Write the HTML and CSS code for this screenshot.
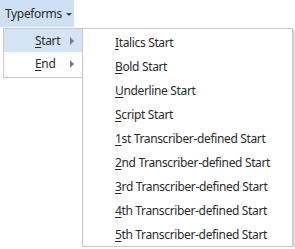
FILE: index.html
```html
<!DOCTYPE html>
<html lang="en">
<head>
  <meta charset="UTF-8" />
  <title>Typeforms</title>
  <link rel="stylesheet" href="styles.css">
</head>
<body>
  <div class="menubar">
    <span class="menu-button">Typeforms <span class="caret"></span></span>
  </div>

  <div class="menus">
    <ul class="menu main-menu">
      <li class="item active"><u>S</u>tart <span class="arrow"></span></li>
      <li class="item"><u>E</u>nd <span class="arrow"></span></li>
    </ul>

    <ul class="menu sub-menu">
      <li class="item"><u>I</u>talics Start</li>
      <li class="item"><u>B</u>old Start</li>
      <li class="item"><u>U</u>nderline Start</li>
      <li class="item"><u>S</u>cript Start</li>
      <li class="item"><u>1</u>st Transcriber-defined Start</li>
      <li class="item"><u>2</u>nd Transcriber-defined Start</li>
      <li class="item"><u>3</u>rd Transcriber-defined Start</li>
      <li class="item"><u>4</u>th Transcriber-defined Start</li>
      <li class="item"><u>5</u>th Transcriber-defined Start</li>
    </ul>
  </div>
</body>
</html>
```

FILE: styles.css
```css
body {
  margin: 0;
  background-color: #fff;
  font-family: "Noto Sans", "Open Sans", sans-serif;
  font-size: 12px;
  letter-spacing: -0.35px;
  color: #2b2b2b;
}

.menubar {
  display: flex;
  height: 27px;
}

.menu-button {
  width: 74px;
  box-sizing: border-box;
  padding-left: 5px;
  background-color: #cde0f4;
  display: flex;
  align-items: center;
  gap: 4px;
}

.caret {
  width: 0;
  height: 0;
  border-left: 3px solid transparent;
  border-right: 3px solid transparent;
  border-top: 3px solid #444;
  margin-top: 1px;
}

.menus {
  display: flex;
  align-items: flex-start;
  margin-top: 1px;
  padding-left: 3px;
}

.menu {
  list-style: none;
  margin: 0;
  background-color: #fff;
  border: 1px solid #c8c8c8;
}

.main-menu {
  width: 78px;
  padding: 0 0 2px 0;
}

.main-menu .item {
  height: 23px;
  display: flex;
  align-items: center;
  padding-left: 31px;
  position: relative;
}

.main-menu .item.active {
  background-color: #d4e4f6;
}

.arrow {
  position: absolute;
  left: 66px;
  top: 8px;
  width: 0;
  height: 0;
  border-top: 4px solid transparent;
  border-bottom: 4px solid transparent;
  border-left: 4px solid #7a7a7a;
}

.sub-menu {
  margin-left: -1px;
  width: 209px;
  padding: 1px 0 0 0;
  box-shadow: 2px 2px 2px rgba(0, 0, 0, 0.18);
}

.sub-menu .item {
  height: 24px;
  display: flex;
  align-items: center;
  padding-left: 32px;
}

u {
  text-decoration-thickness: 1px;
  text-underline-offset: 2px;
}
```
